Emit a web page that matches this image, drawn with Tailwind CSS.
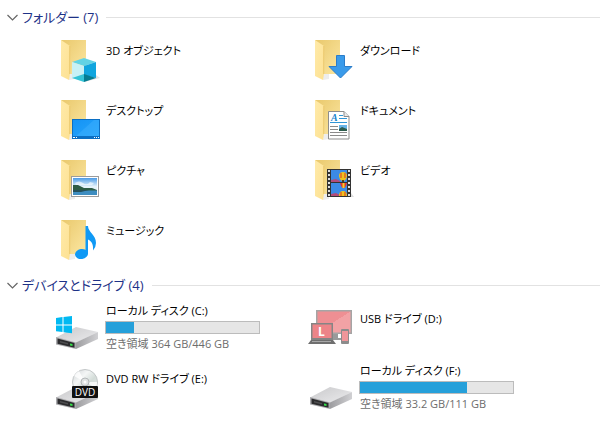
<!DOCTYPE html>
<html lang="ja">
<head>
  <meta charset="UTF-8" />
  <meta name="viewport" content="width=device-width, initial-scale=1.0" />
  <title>PC</title>
  <script src="https://cdn.jsdelivr.net/npm/@tailwindcss/browser@4"></script>
</head>
<body class="bg-white text-black text-[11px] leading-4 font-['Open_Sans','Noto_Sans_CJK_JP',sans-serif] [font-feature-settings:'palt']">

  <!-- shared shapes -->
  <svg class="absolute size-0" aria-hidden="true">
    <defs>
      <linearGradient id="back" x1="0" y1="0" x2="1" y2="1">
        <stop offset="0" stop-color="#e9c86c" />
        <stop offset="1" stop-color="#fce7a2" />
      </linearGradient>
      <linearGradient id="flap" x1="0" y1="0" x2="1" y2="1">
        <stop offset="0" stop-color="#ffeaa9" />
        <stop offset="1" stop-color="#fde192" />
      </linearGradient>
      <linearGradient id="metal" x1="0" y1="0" x2="1" y2="1">
        <stop offset="0" stop-color="#c9c9cb" />
        <stop offset="1" stop-color="#ececee" />
      </linearGradient>
      <linearGradient id="side" x1="0" y1="0" x2="1" y2="0">
        <stop offset="0" stop-color="#9d9da0" />
        <stop offset="1" stop-color="#d0d0d3" />
      </linearGradient>
      <linearGradient id="screen" x1="0" y1="0" x2="1" y2="1">
        <stop offset="0" stop-color="#1493f5" />
        <stop offset="1" stop-color="#27a5fb" />
      </linearGradient>
      <linearGradient id="sky" x1="0" y1="0" x2="0" y2="1">
        <stop offset="0" stop-color="#4b9be6" />
        <stop offset=".5" stop-color="#e6f3fb" />
      </linearGradient>
      <linearGradient id="disc" x1="0" y1="0" x2="1" y2="1">
        <stop offset="0" stop-color="#cfd3d6" />
        <stop offset=".35" stop-color="#f4f6f6" />
        <stop offset=".6" stop-color="#d3dcd8" />
        <stop offset="1" stop-color="#eef0f0" />
      </linearGradient>
      <linearGradient id="pink" x1="0" y1="0" x2="1" y2="1">
        <stop offset="0" stop-color="#ee8f93" />
        <stop offset=".5" stop-color="#ee8f93" />
        <stop offset=".5" stop-color="#f2a2a5" />
        <stop offset="1" stop-color="#f2a2a5" />
      </linearGradient>
    </defs>
    <symbol id="folder" viewBox="0 0 48 48">
      <path d="M15 43l6-1V34h-6z" fill="#ededed" />
      <path d="M7 3h25v34H15z" fill="url(#back)" />
      <path d="M7 3l9 6v28l-1 6-8-4z" fill="url(#flap)" />
      <path d="M15.700 9v28" stroke="#e6c263" stroke-width=".8" />
    </symbol>
    <symbol id="drive" viewBox="0 0 48 48">
      <path d="M2 32.500L22 22l22 5L22 38z" fill="url(#metal)" />
      <path d="M22 37.500l22-10.500v7L22 44z" fill="url(#side)" />
      <path d="M2 32l20 5.500V44L2 39.500z" fill="#a9a9ac" />
      <path d="M3.500 33.500l17 4.500v4.800l-17-4z" fill="#2b2b2d" />
      <path d="M6 36l8 2v1.500l-8-2z" fill="#4e4e50" />
      <path d="M16 38.500l2.500.6v2l-2.500-.6z" fill="#34e04a" />
    </symbol>
  </svg>

  <main>
    <section class="pt-[3px]">
      <h2 class="flex h-7 items-center pl-[6px] text-[13px] leading-5 text-[#1e3287]">
        <button type="button" class="mr-[3px]" aria-label="フォルダーを折りたたむ">
          <svg class="size-[13px]" viewBox="0 0 13 13" fill="none" stroke="#666" stroke-width="1.200"><path d="M1.500 4l5 5 5-5" /></svg>
        </button>
        <span>フォルダー (7)</span>
        <span class="ml-2 h-px flex-1 bg-[#e2e2e2]"></span>
      </h2>

      <ul class="grid auto-rows-[60px] grid-cols-[repeat(auto-fill,254px)] pl-[54px]">
        <li class="flex gap-1">
          <svg class="mt-[6px] size-12" viewBox="0 0 48 48">
            <use href="#folder" />
            <path d="M30 45l16-4-4-3z" fill="#e2e2e2" />
            <path d="M18 25l12-4 12 4-12 4z" fill="#62d3e4" />
            <path d="M18 25l12 4v9l-12 3z" fill="#c8f1f5" />
            <path d="M42 25l-12 4v9l12 3z" fill="#10a5de" />
            <path d="M18 41l12-4v8z" fill="#35c4d6" />
            <path d="M42 41l-12-4v8z" fill="#047c91" />
          </svg>
          <a href="#" class="pt-3">3D オブジェクト</a>
        </li>
        <li class="flex gap-1">
          <svg class="mt-[6px] size-12" viewBox="0 0 48 48">
            <use href="#folder" />
            <path d="M28.500 18.500h8v11h7.500L32.500 41 21 29.500h7.500z" fill="#3a9bea" stroke="#2b7cc9" />
          </svg>
          <a href="#" class="pt-3">ダウンロード</a>
        </li>
        <li class="flex gap-1">
          <svg class="mt-[6px] size-12" viewBox="0 0 48 48">
            <use href="#folder" />
            <rect x="18" y="22" width="28" height="20" fill="#0b6fc4" />
            <rect x="19" y="23" width="26" height="16" fill="url(#screen)" />
            <path d="M22 39L40 23h5v16z" fill="#47b4ff" opacity=".4" />
            <path d="M19 40.500h2M22 40.500h1M40 40.500h1M42 40.500h1M44 40.500h1" stroke="#fff" />
          </svg>
          <a href="#" class="pt-3">デスクトップ</a>
        </li>
        <li class="flex gap-1">
          <svg class="mt-[6px] size-12" viewBox="0 0 48 48">
            <use href="#folder" />
            <path d="M20.500 14.500h15.500l5 5v22.500h-20.500z" fill="#fff" stroke="#8d8d8d" />
            <path d="M36 14.500v5h5" fill="#e8e8e8" stroke="#8d8d8d" />
            <text x="23" y="24" font-family="Liberation Serif, serif" font-size="10" font-weight="bold" font-style="italic" fill="#1683cf">A</text>
            <path d="M31 18.500h4M31 21.500h8M22 25.500h17" stroke="#2f96d8" />
            <path d="M22 29.500h8M22 32.500h8M22 35.500h17M22 38.500h17" stroke="#8b8b8b" />
            <rect x="31" y="28" width="8" height="6" fill="#68b4e8" />
            <path d="M31 32l3-2 5 2v2h-8z" fill="#2d5c4d" />
          </svg>
          <a href="#" class="pt-3">ドキュメント</a>
        </li>
        <li class="flex gap-1">
          <svg class="mt-[6px] size-12" viewBox="0 0 48 48">
            <use href="#folder" />
            <rect x="17.500" y="19.500" width="27" height="20" fill="#fff" stroke="#9c9c9c" />
            <rect x="19" y="21" width="24" height="17" fill="url(#sky)" />
            <path d="M21 26q4-3 8 0t7-1l4 1-2 2H22z" fill="#fff" opacity=".6" />
            <path d="M19 28l5 0 6 3 8 0 5 2v1H19z" fill="#2e5c46" />
            <path d="M19 33.500h24V38H19z" fill="#3e8dc0" />
            <path d="M19 33h16l-8 2h-8z" fill="#244f5a" />
          </svg>
          <a href="#" class="pt-3">ピクチャ</a>
        </li>
        <li class="flex gap-1">
          <svg class="mt-[6px] size-12" viewBox="0 0 48 48">
            <use href="#folder" />
            <path d="M43 40h3l-3-4z" fill="#ddd" />
            <rect x="19" y="12" width="24" height="28" fill="#333" />
            <path d="M21 13v27M41 13v27" stroke="#dedede" stroke-width="2" stroke-dasharray="2 2" />
            <rect x="23" y="13" width="16" height="12" fill="#3b8ae6" />
            <rect x="23" y="26" width="16" height="13" fill="#3b8ae6" />
            <path d="M23 23l5-1 4 2v1h-9zM23 37l5-1 4 2v1h-9z" fill="#b14c7b" />
            <path d="M31 19a4 4 0 0 1 8 0q0 3-3 5h-2q-3-2-3-5z" fill="#f0c21c" />
            <path d="M33 16v5M37 16v5" stroke="#d93a2b" />
            <path d="M34 24h2" stroke="#55401c" stroke-width="2" />
            <path d="M32 26h7q-1 4-2.500 5h-2q-1.500-1-2.500-5z" fill="#e0382b" />
            <path d="M34.500 26h2v5h-2z" fill="#f4cf2a" />
            <path d="M31 39q0-5 4-5t4 5z" fill="#f0c21c" />
            <path d="M33 35v4M37 35v4" stroke="#d93a2b" />
          </svg>
          <a href="#" class="pt-3">ビデオ</a>
        </li>
        <li class="flex gap-1">
          <svg class="mt-[6px] size-12" viewBox="0 0 48 48">
            <use href="#folder" />
            <ellipse cx="27.500" cy="37" rx="6.500" ry="5" transform="rotate(-8 27.500 37)" fill="#0f99f5" />
            <path d="M31.500 9H34c0 6 8 9 8 17q0 4-3 7.500c.5-6-1-9-5-11V37h-2.500z" fill="#0f99f5" />
          </svg>
          <a href="#" class="pt-3">ミュージック</a>
        </li>
      </ul>
    </section>

    <section>
      <h2 class="flex h-7 items-center pl-[6px] text-[13px] leading-5 text-[#1e3287]">
        <button type="button" class="mr-[3px]" aria-label="デバイスとドライブを折りたたむ">
          <svg class="size-[13px]" viewBox="0 0 13 13" fill="none" stroke="#666" stroke-width="1.200"><path d="M1.500 4l5 5 5-5" /></svg>
        </button>
        <span>デバイスとドライブ (4)</span>
        <span class="ml-2 h-px flex-1 bg-[#e2e2e2]"></span>
      </h2>

      <ul class="grid auto-rows-[60px] grid-cols-[repeat(auto-fill,254px)] pl-[54px]">
        <li class="flex gap-[3px]">
          <svg class="mt-[6px] size-12" viewBox="0 0 48 48">
            <use href="#drive" />
            <path d="M2 13l6.500-1v7.500H2zM9.500 11.900L18 11v8.500H9.500zM2 20.500h6.500V27L2 26.200zM9.500 20.500H18v7.800l-8.500-1.100z" fill="#00b9f2" />
          </svg>
          <div class="pt-1">
            <a href="#" class="block pl-px">ローカル ディスク (C:)</a>
            <div class="my-[2px] h-[13px] w-[155px] border border-[#bcbcbc] bg-[#e6e6e6]">
              <div class="h-full bg-[#26a0da]" style="width: 18%"></div>
            </div>
            <p class="pl-px text-[#6d6d6d]">空き領域 364 GB/446 GB</p>
          </div>
        </li>
        <li class="flex gap-1">
          <svg class="mt-[6px] size-12" viewBox="0 0 48 48">
            <path d="M8 5h36v24H8z" fill="#a5a5a5" />
            <path d="M9.500 6.500h33v21h-33z" fill="url(#pink)" />
            <path d="M24 29h6v4h5v2H22z" fill="#9a9a9a" />
            <path d="M3 18h22v17H3z" fill="#858585" />
            <path d="M4.500 19.500h19V33h-19z" fill="#ed8488" />
            <path d="M3 35h22l3 4H0z" fill="#6f6f6f" />
            <path d="M4 36.500h19" stroke="#a7a7a7" />
            <text x="10" y="31" font-family="Open Sans, sans-serif" font-size="12" font-weight="bold" fill="#fff">L</text>
            <rect x="33" y="24" width="8" height="15" rx="1" fill="#8c8c8c" />
            <rect x="34" y="26" width="6" height="10" fill="#f0969a" />
          </svg>
          <a href="#" class="pt-3">USB ドライブ (D:)</a>
        </li>
        <li class="flex gap-1">
          <svg class="mt-[6px] size-12" viewBox="0 0 48 48">
            <use href="#drive" />
            <circle cx="31" cy="17" r="12.500" fill="url(#disc)" stroke="#c3c7c8" />
            <path d="M31 17L20 11a12 12 0 0 1 5-5zM31 17l11 6a12 12 0 0 0 1-6z" fill="#fff" opacity=".8" />
            <circle cx="31" cy="17" r="4" fill="#e1e4e4" stroke="#b4b8ba" />
            <circle cx="31" cy="17" r="1.500" fill="#fff" />
            <rect x="18" y="21" width="26" height="12" rx="1" fill="#111" />
            <text x="31" y="31" text-anchor="middle" font-family="Open Sans, sans-serif" font-size="10" fill="#fff">DVD</text>
          </svg>
          <a href="#" class="pt-3">DVD RW ドライブ (E:)</a>
        </li>
        <li class="flex gap-[3px]">
          <svg class="mt-[6px] size-12" viewBox="0 0 48 48">
            <use href="#drive" />
          </svg>
          <div class="pt-1">
            <a href="#" class="block pl-px">ローカル ディスク (F:)</a>
            <div class="my-[2px] h-[13px] w-[155px] border border-[#bcbcbc] bg-[#e6e6e6]">
              <div class="h-full bg-[#26a0da]" style="width: 70%"></div>
            </div>
            <p class="pl-px text-[#6d6d6d]">空き領域 33.2 GB/111 GB</p>
          </div>
        </li>
      </ul>
    </section>
  </main>

</body>
</html>
